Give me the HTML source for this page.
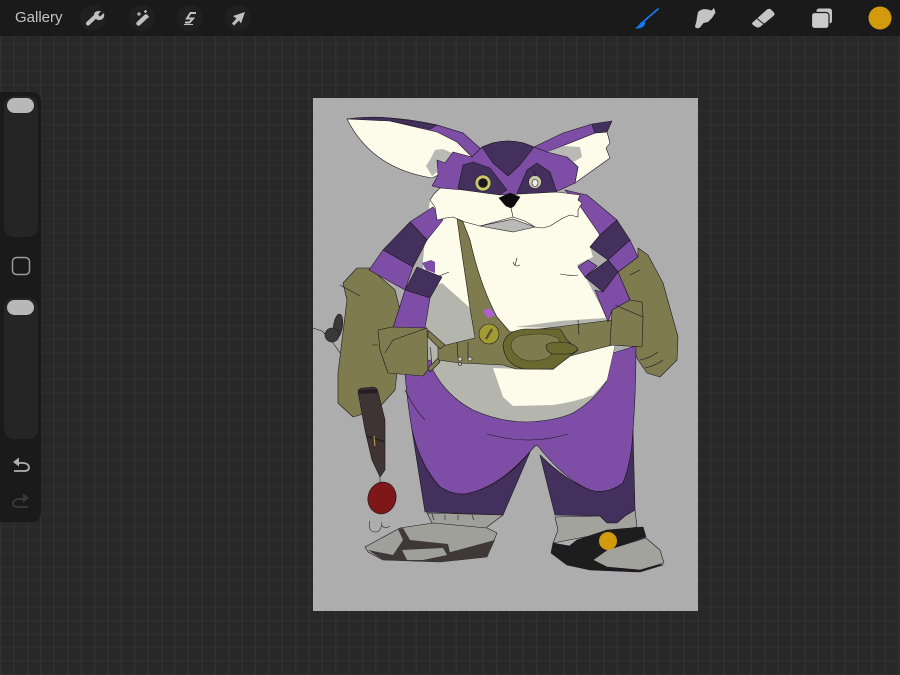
<!DOCTYPE html>
<html><head><meta charset="utf-8"><style>
html,body{margin:0;padding:0;width:900px;height:675px;overflow:hidden;background:#282828}
#bg{position:absolute;left:0;top:0;width:900px;height:675px;background-color:#282828;
background-image:repeating-linear-gradient(90deg,rgba(255,255,255,.035) 0 1.5px,transparent 1.5px 13.4px),repeating-linear-gradient(0deg,rgba(255,255,255,.025) 0 1.5px,transparent 1.5px 13.4px)}
#top{position:absolute;left:0;top:0;width:900px;height:36px;background:#1a1a1a}
#g{position:absolute;left:15px;top:9px;font:15px/18px "Liberation Sans",sans-serif;color:#c4c4c4}
svg{position:absolute;left:0;top:0}
</style></head><body>
<div id="bg"></div><div id="top"></div><div id="g">Gallery</div>
<svg width="900" height="675" viewBox="0 0 900 675">
<!-- sidebar -->
<path d="M0 92H31Q41 92 41 102V512Q41 522 31 522H0Z" fill="#1a1a1a"/>
<rect x="4" y="96" width="34" height="141" rx="10" fill="#252525"/>
<rect x="4" y="298" width="34" height="141" rx="10" fill="#252525"/>
<rect x="7" y="98" width="27" height="15" rx="7.5" fill="#b8b8b8"/>
<rect x="7" y="300" width="27" height="15" rx="7.5" fill="#b8b8b8"/>
<rect x="12.5" y="257.5" width="17" height="17" rx="4" fill="none" stroke="#9a9a9a" stroke-width="1.5"/>
<path d="M16 463H24Q29 464 29 467.500Q29 471 24 471H14" fill="none" stroke="#b0b0b0" stroke-width="1.800"/>
<path d="M13 462l6-4.500v9z" fill="#b0b0b0"/>
<path d="M26 499H18Q13 500 13 503.500Q13 507 18 507H28" fill="none" stroke="#3a3a3a" stroke-width="1.800"/>
<path d="M29 498l-6-4.500v9z" fill="#3a3a3a"/>
<!-- toolbar circles -->
<g fill="#202020"><circle cx="93" cy="18" r="13"/><circle cx="142" cy="18" r="13"/><circle cx="190" cy="18" r="13"/><circle cx="238" cy="18" r="13"/></g>
<!-- wrench -->
<path d="M88 23.500L96.500 15.500" stroke="#c0c0c0" stroke-width="4" stroke-linecap="round"/>
<path d="M95 18Q92 12 98 11L101 11L98 14.500L100 16.500L104 13Q105 19 100 20Q97 20.500 95 18Z" fill="#c0c0c0"/>
<!-- wand -->
<path d="M138.500 23.500L146 16.500" stroke="#c0c0c0" stroke-width="4.500" stroke-linecap="round"/>
<path d="M137 14h4M139 12v4M144 11.500h3M145.500 10v3M147 17h2" stroke="#c0c0c0" stroke-width="1.200"/>
<!-- S -->
<path d="M196 13H190.500L187 18.500H193L189.500 22.500H185" fill="none" stroke="#c0c0c0" stroke-width="2"/>
<path d="M184 24.500H193" stroke="#c0c0c0" stroke-width="1"/>
<!-- arrow -->
<path d="M245 12L233 16L236.500 18.500L232 23.500L234 25.500L239 20.500L241 23.500Z" fill="#c0c0c0"/>
<!-- brush -->
<path d="M658 9L643 22" stroke="#1479f0" stroke-width="1.800" stroke-linecap="round"/>
<path d="M644 21Q640 22 639 25L635 28.500Q641 29 644 26Q646 23 644 21Z" fill="#1479f0"/>
<!-- smudge -->
<path d="M698 12Q702 8 708 9.500L711.500 10.500L714 8L715.500 12.500L712 18L708 22L703.500 23L700 27.500Q696 29.500 695 26.500L696.500 21L697 17Z" fill="#c4c4c4"/>
<!-- eraser -->
<path d="M752 23L767 9.500Q769 8 771 9.500L774 12.500Q775 14 774 15.500L760 27Q758 28 756 27L753 25Q752 24 752 23Z" fill="#c4c4c4"/>
<path d="M757 18.500L765 25" stroke="#1a1a1a" stroke-width="1"/>
<!-- layers -->
<rect x="816.500" y="8.500" width="15.500" height="15" rx="2.500" fill="#c4c4c4"/>
<rect x="811.500" y="12.500" width="17.500" height="16" rx="3" fill="#cacaca" stroke="#1a1a1a" stroke-width="1.200"/>
<circle cx="880" cy="18" r="11.500" fill="#d29b0d"/>
<!-- canvas -->
<rect x="313" y="98" width="385" height="513" fill="#adadad"/>
<g stroke="#1c1620" stroke-width=".6" stroke-linejoin="round" style="filter:blur(.35px)">
<!-- fishing gear -->
<path d="M313 328L322 331L328 337L333 343L343 357" fill="none"/>
<ellipse cx="338" cy="326" rx="4.500" ry="12" transform="rotate(8 338 326)" fill="#3b3838"/>
<ellipse cx="332" cy="335" rx="7" ry="7" fill="#3b3838"/>
<!-- mittens -->
<path d="M343 283L357 268H370L395 290L405 330L397 373L395 390L377 410L353 417L338 403L338 373L347 300Z" fill="#7e7b4e"/>
<path d="M638 248L648 255L663 283L678 337L677 360L660 377L647 373L638 360L630 340L630 300L618 272L638 257Z" fill="#7e7b4e"/>
<path d="M640 360Q650 358 658 352M645 368Q655 366 663 360M630 275L640 270" fill="none"/>
<!-- pants -->
<path d="M405 373Q407 400 412 430Q420 465 440 487Q453 495 465 494Q500 488 534 447L537 445Q565 480 590 490Q607 495 623 483Q632 460 633 430Q636 390 636 346L590 360H430Z" fill="#7e4ea6"/>
<path d="M412 430L425 512L503 515L530 452Q500 488 465 494Q453 495 440 487Q420 465 412 430Z" fill="#44305c"/>
<path d="M540 455L555 515L600 516L607 523L617 523L625 516L635 510L633 430Q632 460 623 483Q607 495 590 490Q565 480 540 455Z" fill="#44305c"/>
<path d="M487 434Q530 446 568 434M405 390Q415 410 425 420" fill="none"/>
<!-- belly grey -->
<path d="M432 368Q445 395 473 410Q500 422 527 422Q555 421 573 413Q595 400 607 380L615 345L430 340Z" fill="#b4b6ae"/>
<path d="M493 368L503 397L513 406L553 405Q575 402 593 395L607 380L615 345L570 355L553 370Z" fill="#fdfbe9" stroke="none"/>
<!-- chest upper -->
<path d="M430 200H590L600 240L590 247L593 257L577 265L587 280L608 320L560 328L510 332L475 338L438 347L430 345L425 320L423 260L425 240Z" fill="#fdfbe9" stroke="none"/>
<path d="M432 287L442 283L470 308L475 340L438 350L425 345L425 320Z" fill="#b4b6ae" stroke="none"/>
<path d="M515 327L560 321L605 318L608 322L560 328Z" fill="#b4b6ae" stroke="none"/>
<path d="M515 265L517 258M513 262Q515 268 520 265M560 274Q570 276 578 275M437 277L449 272" fill="none"/>
<!-- strap and belt -->
<path d="M457 218L463 222L470 240Q480 285 497 317L510 332L557 327L612 320L612 345L570 356L553 369L516 369L503 365L460 363L438 360V347L475 338L470 308L460 240Z" fill="#7e7b4e"/>
<path d="M428 330L445 345L440 349L428 337ZM428 368L438 358L440 362L430 372Z" fill="#7e7b4e"/>
<!-- left arm -->
<path d="M433 207L410 222L427 240L443 220Z" fill="#7e4ea6"/>
<path d="M410 222L383 250L413 267L427 240Z" fill="#44305c"/>
<path d="M383 250L369 270L405 290L413 267Z" fill="#7e4ea6"/>
<path d="M417 267L442 277L430 298L405 290Z" fill="#44305c"/>
<path d="M405 290L430 298L425 328L393 328Z" fill="#7e4ea6"/>
<path d="M422 263L431 260L435 262L435 273L426 270Z" fill="#7e4ea6" stroke="none"/>
<!-- right arm -->
<path d="M565 190L587 195L617 220L600 235L578 203Z" fill="#7e4ea6"/>
<path d="M617 220L630 240L608 260L590 247L600 235Z" fill="#44305c"/>
<path d="M630 240L638 257L618 272L608 260Z" fill="#7e4ea6"/>
<path d="M608 260L618 272L603 292L585 277Z" fill="#44305c"/>
<path d="M578 267L588 260L597 266L585 277Z" fill="#7e4ea6"/>
<path d="M595 290L603 292L618 272L630 300L612 310L608 322Z" fill="#7e4ea6"/>
<!-- left pouch -->
<path d="M378 330L392 327L427 328L428 370L423 376L388 373L380 350Z" fill="#7e7b4e"/>
<path d="M385 353L393 340L427 328" fill="none"/>
<!-- right pouch -->
<path d="M612 310L630 300L642 302L643 317L642 347L610 345Z" fill="#7e7b4e"/>
<path d="M615 305L643 317" fill="none"/>
<!-- buckle -->
<path d="M503 345Q505 331 525 329H560L567 340L578 350L553 369L525 369Q505 366 503 345Z" fill="#6b692f"/>
<path d="M511 345Q512 335 528 335Q545 332 558 338L562 345L548 358Q530 364 520 358Q511 352 511 345Z" fill="#7e7b4e" stroke="#3c3a1e"/>
<path d="M546 345Q550 342 560 342Q575 343 578 349Q575 354 566 354H553Q546 352 546 345Z" fill="#6b692f"/>
<circle cx="489" cy="334" r="10" fill="#a29a33"/>
<path d="M486 339L492 329" stroke="#5a5530" stroke-width="2.500"/>
<path d="M483 311L490 308L495 315L488 318Z" fill="#b35fd8" stroke="none"/>
<circle cx="460" cy="359" r="2" fill="#ccc"/><circle cx="470" cy="359" r="2" fill="#ccc"/><circle cx="460" cy="364" r="1.500" fill="#ccc"/>
<path d="M457 342L458 358M468 342L468 358M578 320L579 335" fill="none"/>
<!-- left ear -->
<path d="M347 119Q388 114 437 125L463 133L478 150L470 160L432 178C395 172 365 155 347 119Z" fill="#fdfbe9"/>
<path d="M390 118Q415 120 437 125L463 133L482 150L472 157L457 142L437 132L390 121Z" fill="#7e4ea6"/>
<path d="M347 119Q370 116 390 118L437 125L430 129L390 121Z" fill="#44305c"/>
<path d="M443 149L435 150L431 158L426 166L432 176L437 172L437 160L445 163L452 153Z" fill="#b9bab5" stroke="none"/>
<!-- right ear -->
<path d="M547 152L595 133L607 132L610 143L606 148L610 158L575 183L578 167L567 157Z" fill="#fdfbe9"/>
<path d="M534 147L563 133L592 124L595 133L547 152Z" fill="#7e4ea6"/>
<path d="M592 124L612 121L607 132L595 133Z" fill="#44305c"/>
<path d="M547 152L563 146L580 147L582 157L572 163L563 157Z" fill="#b9bab5" stroke="none"/>
<!-- head -->
<path d="M547 152L567 157L578 167L575 183L560 190L540 197H480L432 186L438 175L437 160L445 163L453 152L472 157L482 147Q508 135 534 147Z" fill="#7e4ea6"/>
<path d="M482 147Q508 135 534 147L520 165L508 176L493 163Z" fill="#44305c"/>
<path d="M458 188L463 165L473 162L490 168L507 190L497 196L477 194Z" fill="#44305c"/>
<path d="M517 193L527 170L537 163L550 172L557 193L537 197Z" fill="#44305c"/>
<path d="M499 172L508 181L518 172L509 190Z" fill="#7e4ea6" stroke="none"/>
<circle cx="483" cy="183" r="8" fill="#c9c56a"/><circle cx="483" cy="183" r="4.500" fill="#1c1620"/>
<circle cx="535" cy="182" r="6.500" fill="#c8c7a8"/><ellipse cx="535" cy="183" rx="3" ry="3.500" fill="#eee"/><path d="M533 170L536 176" fill="none"/>
<!-- face fur -->
<path d="M430 200L434 194L440 188L463 190L500 195L557 192L580 195L578 200L582 203L578 210L578 217L570 215L563 218L550 226L543 228L535 227L525 221L513 217L495 222L480 226L465 222L453 217L446 218L437 220L435 207Z" fill="#fdfbe9"/>
<path d="M480 226L513 219L535 227L513 232Z" fill="#b9bab5"/>
<path d="M499 198L510 193L520 197L514 206L511 208L506 206Z" fill="#0c0c0c"/>
<path d="M511 208L513 217" fill="none"/>
<!-- lure -->
<path d="M358 392Q358 388 363 388L373 387Q377 387 378 392L385 420L385 470L380 477L372 460L365 430Z" fill="#3e3433"/>
<path d="M359 392L377 391" stroke="#241f22" stroke-width="4"/>
<path d="M367 436L385 442" stroke="#241f22" stroke-width="1.500"/>
<path d="M374 436L375 446" stroke="#c9a84a" stroke-width="1"/>
<path d="M380 477V485" fill="none"/>
<ellipse cx="382" cy="498" rx="14" ry="16" transform="rotate(15 382 498)" fill="#7e1717"/>
<path d="M370 521Q367 532 376 532Q381 532 382 522M382 525Q384 530 390 526" fill="none" stroke="#2a2a2a"/>
<!-- left foot -->
<path d="M427 513L503 515L487 527L487 532L433 525Z" fill="#a0a09b"/>
<path d="M432 514L434 520M445 515L445 520M458 515L458 520M472 515L474 520" fill="none"/>
<path d="M365 547L400 528L433 523L487 528L497 533L487 557L440 562L383 560L368 552Z" fill="#a0a09b"/>
<path d="M368 550L393 555L447 553L495 540L487 557L440 562L383 560Z" fill="#3e3836" stroke="none"/>
<path d="M398 529L403 528L410 540L448 544L450 553L440 560L397 558L393 555L403 540Z" fill="#3e3836" stroke="none"/>
<path d="M402 550L443 548L447 555L423 560L407 560Z" fill="#a0a09b" stroke="none"/>
<!-- right foot -->
<path d="M555 517L600 516L607 523L617 523L625 516L635 510L637 527L553 543L558 530Z" fill="#a3a39d"/>
<path d="M553 543L551 553L567 565L590 570L640 572L663 565L600 555L575 547Z" fill="#1d1d1d"/>
<path d="M567 548L577 540L607 530L643 527L646 537L607 550L593 560L570 553Z" fill="#1d1d1d"/>
<path d="M593 560L607 550L646 538L660 550L664 563L640 570L607 567Z" fill="#a3a39d"/>
<circle cx="608" cy="541" r="9" fill="#d29b0d" stroke="none"/>
<!-- ink lines -->
<path d="M340 285L360 296M372 345L378 345" fill="none"/>
</g>
</svg>
</body></html>
